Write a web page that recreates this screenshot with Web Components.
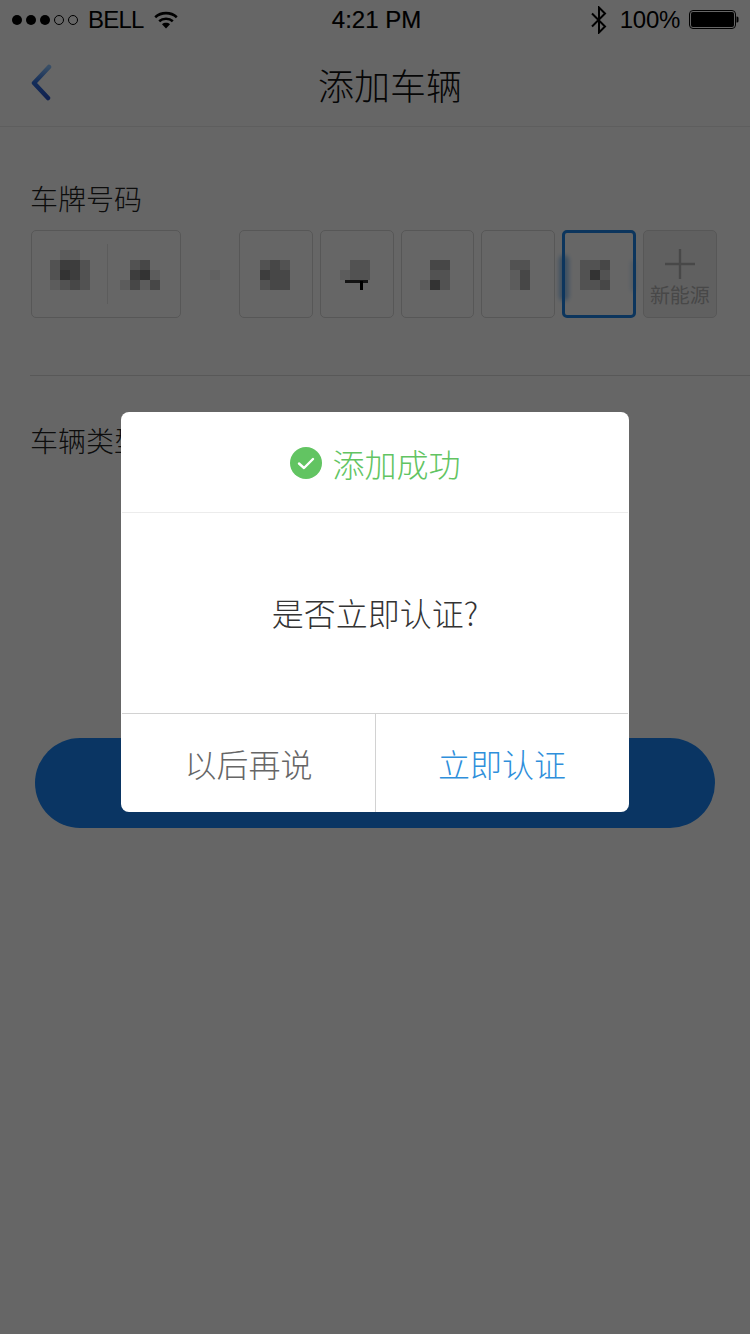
<!DOCTYPE html>
<html lang="zh">
<head>
<meta charset="utf-8">
<title>添加车辆</title>
<style>
  html,body{margin:0;padding:0;background:#fff;}
  body{width:750px;height:1334px;overflow:hidden;font-family:"Liberation Sans","Noto Sans CJK SC",sans-serif;}
</style>
</head>
<body>
<add-vehicle-page></add-vehicle-page>
<script>
const CJK = '"Noto Sans CJK SC","Liberation Sans",sans-serif';

class StatusBar extends HTMLElement{
  constructor(){super();this.attachShadow({mode:'open'}).innerHTML=`
  <style>
    :host{display:grid;grid-template-columns:1fr auto 1fr;align-items:center;height:40px;padding:0 11px 0 12px;color:#000;font:24px/40px "Liberation Sans",sans-serif;letter-spacing:-.3px;box-sizing:border-box}
    .l,.r{display:flex;align-items:center}
    .r{justify-content:flex-end}
    .carrier{margin-left:9px;letter-spacing:-.8px}
    .wifi{margin-left:10px}
    .time{letter-spacing:0;font-weight:500;-webkit-text-stroke:.2px #000;margin-left:2px}
    .bt{margin-right:12px}
    .batt{margin-left:9px;display:block}
    svg{display:block}
  </style>
  <div class="l">
    <svg width="67" height="12" viewBox="0 0 67 12"><g fill="#000"><circle cx="5" cy="6" r="5"/><circle cx="19" cy="6" r="5"/><circle cx="33" cy="6" r="5"/></g><g fill="none" stroke="#000" stroke-width="1"><circle cx="47" cy="6" r="4.5"/><circle cx="61" cy="6" r="4.5"/></g></svg>
    <span class="carrier">BELL</span>
    <svg class="wifi" width="24" height="18" viewBox="0 0 24 18"><g fill="none" stroke="#000" stroke-width="2.6"><path d="M1.2 6.2C7.200 .8 16.800 .8 22.800 6.200"/><path d="M5.200 10.200C8.800 7 15.200 7 18.800 10.200"/></g><path d="M12 17.500 8 13.200C10.200 11.400 13.800 11.400 16 13.200Z" fill="#000"/></svg>
  </div>
  <div class="time">4:21 PM</div>
  <div class="r">
    <svg class="bt" width="18" height="28" viewBox="0 0 18 28"><path d="M2 7.500 15 20.500 9 26.500V1.500L15 7.500 2 20.500" fill="none" stroke="#000" stroke-width="2"/></svg>
    <span>100%</span>
    <svg class="batt" width="50" height="20" viewBox="0 0 50 20"><rect x=".5" y=".5" width="46" height="18" rx="3.500" fill="none" stroke="#000"/><rect x="2" y="2" width="43" height="15" rx="2" fill="#000"/><path d="M47.500 6.500h.5a1.500 1.500 0 0 1 1.500 1.500v3a1.500 1.500 0 0 1-1.500 1.500h-.5z" fill="#000"/></svg>
  </div>`}
}
customElements.define('status-bar',StatusBar);

class NavBar extends HTMLElement{
  constructor(){super();this.attachShadow({mode:'open'}).innerHTML=`
  <style>
    :host{display:grid;grid-template-columns:1fr auto 1fr;align-items:center;height:87px;box-sizing:border-box;border-bottom:1px solid #ececec;padding:0 0 0 30px;padding-bottom:1px}
    .t{font:300 36px/44px ${CJK};color:#111;letter-spacing:0;margin-top:3px}
    svg{display:block;margin-top:0}
  </style>
  <svg width="44" height="38" viewBox="0 0 44 38">
    <defs><linearGradient id="g" x1="0" y1="0" x2="1" y2="0"><stop offset="0" stop-color="#2f6fd8"/><stop offset=".35" stop-color="#3b66dd"/><stop offset=".75" stop-color="#6a4ad8"/><stop offset="1" stop-color="#b03ad0"/></linearGradient>
    <linearGradient id="h" x1="0" y1="0" x2="0" y2="1"><stop offset="0" stop-color="#8cc4ff"/><stop offset=".5" stop-color="#2f6fe0"/><stop offset="1" stop-color="#2a55c8"/></linearGradient></defs>
    <path d="M4 19H40" stroke="url(#g)" stroke-width="4.500" stroke-linecap="round" fill="none" gradientUnits="userSpaceOnUse"/>
    <path d="M19 3 4 19 18 34" stroke="url(#h)" stroke-width="4.500" stroke-linecap="round" stroke-linejoin="round" fill="none"/>
  </svg>
  <div class="t"><slot></slot></div>
  <span></span>`}
}
customElements.define('nav-bar',NavBar);

class FieldLabel extends HTMLElement{
  constructor(){super();this.attachShadow({mode:'open'}).innerHTML=`
  <style>:host{display:block;padding-left:30px;font:300 28px/32px ${CJK};color:#222}</style><slot></slot>`}
}
customElements.define('field-label',FieldLabel);

class MosaicGlyph extends HTMLElement{
  connectedCallback(){
    if(this.shadowRoot) return;
    const rows=(this.getAttribute('rows')||'').split(' ');
    const html=rows.map(r=>[...r].map(c=>`<i style="background:rgba(0,0,0,${(+c)*.1})"></i>`).join('')).join('');
    this.attachShadow({mode:'open'}).innerHTML=`
    <style>
      :host{display:block;position:relative;width:max-content}
      .g{display:grid;grid-template-columns:repeat(${rows[0].length},10px);grid-auto-rows:10px}
      i{display:block}
    </style><div class="g">${html}</div><slot></slot>`;
  }
}
customElements.define('mosaic-glyph',MosaicGlyph);

class PlateCell extends HTMLElement{
  constructor(){super();this.attachShadow({mode:'open'}).innerHTML=`
  <style>
    :host{display:flex;position:relative;box-sizing:border-box;width:73.800px;height:88px;border:1px solid #d9d9d9;border-radius:5px;padding-top:19px;flex:none}
    :host([wide]){width:150px}
    :host([active]){border:3px solid #1f86e8;padding-top:17px}
    :host([active])::before{content:"";position:absolute;left:-6px;top:22px;width:10px;height:46px;border-radius:5px;background:#1f86e8;opacity:.45;filter:blur(2px)}
    :host([active])::after{content:"";position:absolute;right:-2px;top:28px;width:4px;height:30px;background:#1f86e8;opacity:.25;filter:blur(2px)}
    ::slotted(*){flex:none}
  </style><slot></slot>`}
}
customElements.define('plate-cell',PlateCell);

class NewEnergyCell extends HTMLElement{
  constructor(){super();this.attachShadow({mode:'open'}).innerHTML=`
  <style>
    :host{display:flex;flex-direction:column;align-items:center;box-sizing:border-box;width:73.800px;height:88px;border:1px solid #d9d9d9;border-radius:5px;background:#f0f0f0;flex:none;color:#b4b4b4}
    svg{display:block;margin-top:18px}
    span{font:400 20px/26px ${CJK};margin-top:3px}
  </style>
  <svg width="30" height="30" viewBox="0 0 30 30"><path d="M0 15H30M15 0V30" stroke="#b4b4b4" stroke-width="2.400" fill="none"/></svg>
  <span><slot></slot></span>`}
}
customElements.define('new-energy-cell',NewEnergyCell);

class PlateRow extends HTMLElement{
  constructor(){super();this.attachShadow({mode:'open'}).innerHTML=`
  <style>
    :host{display:flex;gap:7px;padding-left:31px;box-sizing:border-box}
    .dot{width:44px;padding:40px 0 0 22px;box-sizing:border-box;flex:none}
    .dot i{display:block;width:10px;height:10px;background:rgba(0,0,0,.05)}
  </style>
  <slot name="a"></slot><div class="dot"><i></i></div><slot></slot>`}
}
customElements.define('plate-row',PlateRow);

class PrimaryButton extends HTMLElement{
  constructor(){super();this.attachShadow({mode:'open'}).innerHTML=`
  <style>:host{display:block;height:90px;border-radius:45px;background:#1986f8;margin:0 35px}</style><slot></slot>`}
}
customElements.define('primary-button',PrimaryButton);

class ConfirmDialog extends HTMLElement{
  constructor(){super();this.attachShadow({mode:'open'}).innerHTML=`
  <style>
    :host{display:block;position:absolute;inset:0;background:rgba(0,0,0,.6);padding-top:412px;box-sizing:border-box}
    .box{width:508px;height:400px;margin-left:121px;background:#fff;border-radius:8px;display:flex;flex-direction:column;overflow:hidden;font-family:${CJK};font-weight:300;padding:0 1px;box-sizing:border-box}
    .head{height:101px;box-sizing:border-box;border-bottom:1px solid #ececec;display:flex;align-items:center;justify-content:center;gap:10px;color:#62c462;font-size:32px;padding-left:1px;padding-top:2px}
    .head svg{display:block;margin-top:-1px}
    .body{flex:none;height:201px;box-sizing:border-box;border-bottom:1px solid #d2d2d2;display:flex;align-items:center;justify-content:center;font-size:32px;color:#333;padding-bottom:2px}
    .foot{flex:1;display:grid;grid-template-columns:253px 1px 1fr}
    .foot div{display:flex;align-items:center;justify-content:center;font-size:32px;padding-bottom:0}
    .foot i{background:#d2d2d2}
    .no{color:#666}
    .yes{color:#2f8fdb}
  </style>
  <div class="box">
    <div class="head">
      <svg width="32" height="32" viewBox="0 0 32 32"><circle cx="16" cy="16" r="16" fill="#62c462"/><path d="M9 16.500 14 21 23 12" fill="none" stroke="#fff" stroke-width="2.400" stroke-linecap="round" stroke-linejoin="round"/></svg>
      <span>添加成功</span>
    </div>
    <div class="body">是否立即认证?</div>
    <div class="foot"><div class="no">以后再说</div><i></i><div class="yes">立即认证</div></div>
  </div>`}
}
customElements.define('confirm-dialog',ConfirmDialog);

class AddVehiclePage extends HTMLElement{
  constructor(){super();this.attachShadow({mode:'open'}).innerHTML=`
  <style>
    :host{display:block;position:relative;width:750px;height:1334px;background:#fff;overflow:hidden}
    .l1{margin-top:55px}
    plate-row{margin-top:16px}
    hr{border:0;height:1px;background:#dcdcdc;margin:57px 0 0 30px}
    .l2{margin-top:48px}
    primary-button{margin-top:282px}
    .divider{position:absolute;left:25px;top:14px;width:1px;height:60px;background:rgba(0,0,0,.08)}
    .slash{position:absolute}
  </style>
  <status-bar></status-bar>
  <nav-bar>添加车辆</nav-bar>
  <field-label class="l1">车牌号码</field-label>
  <plate-row>
    <plate-cell slot="a" wide style="padding-left:18px;padding-top:19px;gap:30px">
      <mosaic-glyph rows="0110 2442 2542 1232"></mosaic-glyph>
      <mosaic-glyph rows="0000 0230 0451 1313"></mosaic-glyph>
      <span style="position:absolute;left:75px;top:13px;width:1px;height:60px;background:rgba(0,0,0,.1)"></span>
    </plate-cell>
    <plate-cell style="padding-left:20px;padding-top:29px"><mosaic-glyph rows="232 433 233"></mosaic-glyph></plate-cell>
    <plate-cell style="padding-left:19px;padding-top:29px"><mosaic-glyph rows="022 122 000">
      <svg style="position:absolute;left:5px;top:18px" width="24" height="12" viewBox="0 0 24 12"><path d="M0 3.500H23" stroke="#333" stroke-width="3"/><path d="M16.500 3V12" stroke="#000" stroke-width="3"/></svg>
    </mosaic-glyph></plate-cell>
    <plate-cell style="padding-left:18px;padding-top:29px"><mosaic-glyph rows="033 022 152"></mosaic-glyph></plate-cell>
    <plate-cell style="padding-left:28px;padding-top:29px"><mosaic-glyph rows="22 13 13"></mosaic-glyph></plate-cell>
    <plate-cell active style="padding-left:15px;padding-top:27px"><mosaic-glyph rows="223 252 223"></mosaic-glyph></plate-cell>
    <new-energy-cell>新能源</new-energy-cell>
  </plate-row>
  <hr>
  <field-label class="l2">车辆类型</field-label>
  <primary-button></primary-button>
  <confirm-dialog></confirm-dialog>`}
}
customElements.define('add-vehicle-page',AddVehiclePage);
</script>
</body>
</html>
